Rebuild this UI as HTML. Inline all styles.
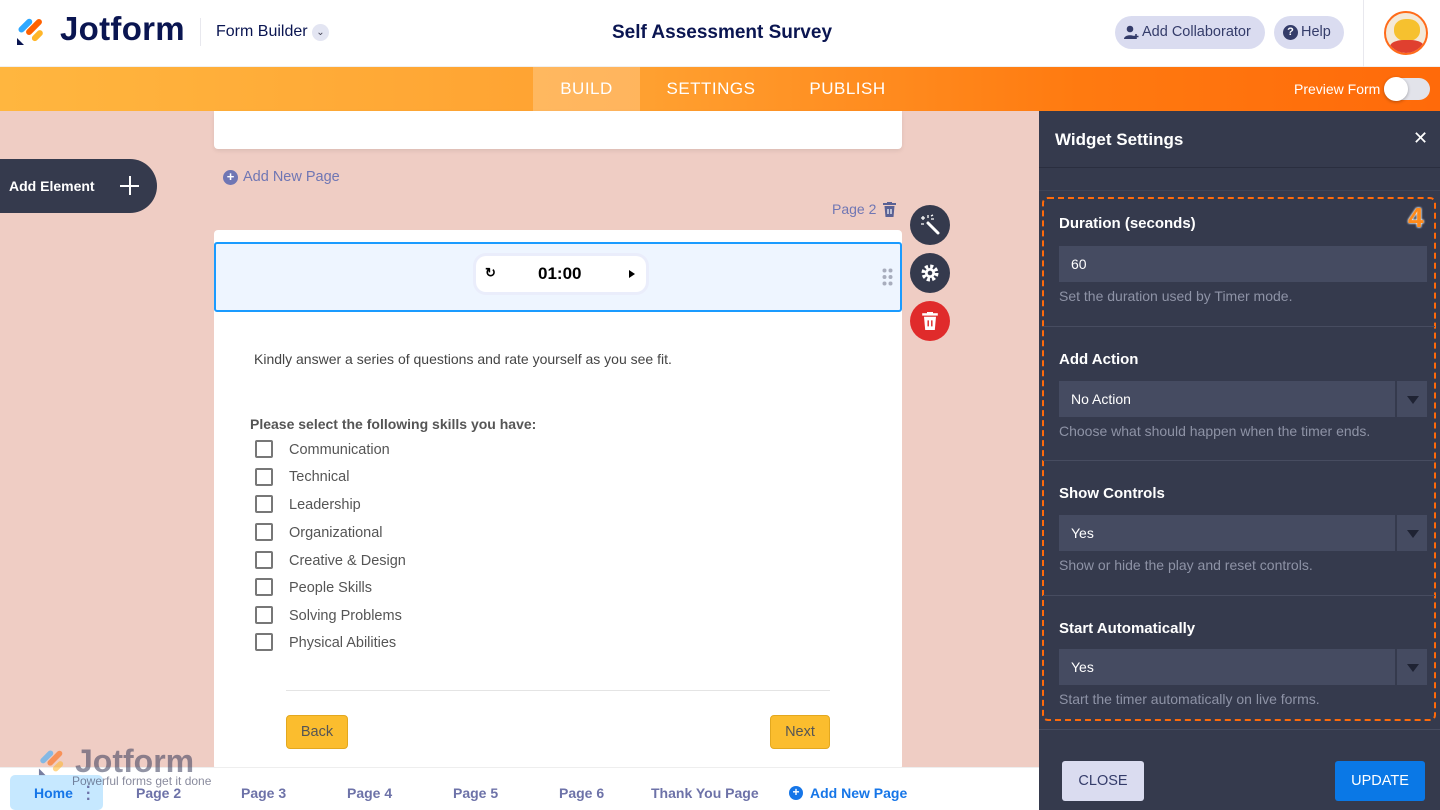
<!DOCTYPE html>
<html><head><meta charset="utf-8"><style>
*{box-sizing:border-box;margin:0;padding:0}
body{width:1440px;height:810px;overflow:hidden;background:#efcdc4;font-family:"Liberation Sans",sans-serif;position:relative}
.abs{position:absolute}
.hdr{left:0;top:0;width:1440px;height:67px;background:#fff;border-bottom:1px solid #f0f0f0}
.bar{left:0;top:67px;width:1440px;height:44px;background:linear-gradient(90deg,#ffb63f 0%,#ffa030 45%,#ff7a10 75%,#ff6a0a 100%)}
.tab{top:67px;height:44px;color:#fff;font-size:17px;letter-spacing:.5px;line-height:44px;text-align:center}
.side{left:1039px;top:111px;width:401px;height:699px;background:#353a4d}
.lbl{color:#fff;font-weight:bold;font-size:15px}
.inp{left:1059px;width:368px;height:36px;background:#454b61;color:#fff;font-size:14px;line-height:36px;padding-left:12px}
.arr{right:0;top:0;width:32px;height:36px;border-left:2px solid #353a4d}
.arr:after{content:"";position:absolute;left:10px;top:15px;border:6px solid transparent;border-top:8px solid #1f2333}
.hint{left:1059px;color:#8e93a6;font-size:14px}
.sep{left:1043px;width:392px;height:1px;background:#474c60}
.cb{left:255px;width:18px;height:18px;border:2px solid #777;border-radius:2px}
.opt{left:289px;font-size:14.5px;color:#555}
.pg{top:785px;font-size:14px;color:#6d72a8;font-weight:bold}
</style></head><body>
<div class="abs hdr"></div>
<svg class="abs" style="left:16px;top:14px" width="32" height="32" viewBox="0 0 32 32"><rect x="1" y="9" width="17" height="6" rx="3" transform="rotate(-45 9 12)" fill="#2ea8ff"/><rect x="8" y="10" width="20" height="6" rx="3" transform="rotate(-45 18 13)" fill="#ff6100"/><rect x="15" y="19" width="13" height="6" rx="3" transform="rotate(-45 21 22)" fill="#ffb629"/><path d="M1 24 L8 31 L1 31Z" fill="#0a1551"/></svg>
<div class="abs" style="left:60px;top:10px;font-size:33px;font-weight:bold;color:#0a1551;letter-spacing:0.3px">Jotform</div>
<div class="abs" style="left:200px;top:18px;width:1px;height:28px;background:#e8e8ee"></div>
<div class="abs" style="left:216px;top:23px;font-size:16px;color:#0a1551">Form Builder</div>
<div class="abs" style="left:312px;top:24px;width:17px;height:17px;border-radius:50%;background:#e3e5f2;color:#445;font-size:10px;text-align:center;line-height:17px">&#8964;</div>
<div class="abs" style="left:0;width:1444px;top:22px;text-align:center;font-size:19px;font-weight:bold;color:#0a1551">Self Assessment Survey</div>
<div class="abs" style="left:1115px;top:16px;width:150px;height:33px;border-radius:17px;background:#dadcf0;color:#343c6a;font-size:14.5px;line-height:33px;padding-left:27px">Add Collaborator</div>
<svg class="abs" style="left:1124px;top:25px" width="15" height="15" viewBox="0 0 15 15"><circle cx="6" cy="4" r="3.3" fill="#343c6a"/><path d="M0 14c0-5 12-5 12 0z" fill="#343c6a"/><path d="M12 9v5M9.5 11.5h5" stroke="#343c6a" stroke-width="1.6"/></svg>
<div class="abs" style="left:1274px;top:16px;width:70px;height:33px;border-radius:17px;background:#dadcf0;color:#343c6a;font-size:14.5px;line-height:33px;padding-left:27px">Help</div>
<div class="abs" style="left:1283px;top:25px;width:15px;height:15px;border-radius:50%;background:#343c6a;color:#fff;font-size:11px;font-weight:bold;text-align:center;line-height:15px">?</div>
<div class="abs" style="left:1363px;top:0;width:1px;height:67px;background:#e8e8ee"></div>
<div class="abs" style="left:1384px;top:11px;width:44px;height:44px;border-radius:50%;background:#f4e9d8;border:2px solid #ff6b1a;overflow:hidden"><div class="abs" style="left:8px;top:6px;width:26px;height:22px;border-radius:45%;background:#f6c12f"></div><div class="abs" style="left:4px;top:27px;width:34px;height:16px;border-radius:40% 40% 0 0;background:#e0402f"></div></div>
<div class="abs bar"></div>
<div class="abs tab" style="left:533px;width:107px;background:rgba(255,255,255,.22)">BUILD</div>
<div class="abs tab" style="left:655px;width:112px">SETTINGS</div>
<div class="abs tab" style="left:795px;width:105px">PUBLISH</div>
<div class="abs" style="left:1294px;top:81px;color:#fff;font-size:14px">Preview Form</div>
<div class="abs" style="left:1384px;top:78px;width:46px;height:22px;border-radius:11px;background:#e2e3ea"></div>
<div class="abs" style="left:1384px;top:77px;width:24px;height:24px;border-radius:50%;background:#fff;box-shadow:0 1px 3px rgba(0,0,0,.3)"></div>

<!-- canvas -->
<div class="abs" style="left:214px;top:111px;width:688px;height:38px;background:#fff;border-radius:0 0 4px 4px;box-shadow:0 2px 4px rgba(0,0,0,.08)"></div>
<div class="abs" style="left:0;top:159px;width:157px;height:54px;background:#353a4d;border-radius:0 27px 27px 0"></div>
<div class="abs" style="left:9px;top:178px;color:#fff;font-size:14px;font-weight:bold">Add Element</div>
<div class="abs" style="left:120px;top:185px;width:19px;height:2px;background:#fff"></div>
<div class="abs" style="left:128.5px;top:176px;width:2px;height:19px;background:#fff"></div>
<div class="abs" style="left:223px;top:170px;width:15px;height:15px;border-radius:50%;background:#6f76b4;color:#fff;font-size:13px;line-height:14px;text-align:center;font-weight:bold">+</div>
<div class="abs" style="left:243px;top:169px;font-size:14.5px;color:#6f76b4">Add New Page</div>
<div class="abs" style="left:832px;top:201px;font-size:14px;color:#6f76b4">Page 2</div>
<svg class="abs" style="left:883px;top:202px" width="13" height="15" viewBox="0 0 13 15"><rect x="0" y="1" width="13" height="2" fill="#5a6194"/><rect x="4" y="0" width="5" height="2" fill="#5a6194"/><path d="M1.5 4h10l-1 11h-8z" fill="#5a6194"/><path d="M5 7v5M8 7v5" stroke="#fff" stroke-width="1.2"/></svg>
<div class="abs" style="left:214px;top:230px;width:688px;height:540px;background:#fff;border-radius:4px"></div>
<div class="abs" style="left:214px;top:242px;width:688px;height:70px;background:#eef5ff;border:2px solid #1a9bff;border-radius:3px"></div>
<div class="abs" style="left:476px;top:256px;width:170px;height:36px;border-radius:10px;background:#fff;box-shadow:0 0 0 3px #eaedfb"></div>
<div class="abs" style="left:485px;top:265px;font-size:13px;color:#000;font-weight:bold">&#8635;</div>
<div class="abs" style="left:538px;top:264px;font-size:17px;font-weight:bold;color:#000">01:00</div>
<div class="abs" style="left:629px;top:270px;border:4px solid transparent;border-left:6px solid #000;border-right:0"></div>
<svg class="abs" style="left:882px;top:268px" width="11" height="18"><g fill="#a8adbd"><circle cx="2.5" cy="2.5" r="2"/><circle cx="8.5" cy="2.5" r="2"/><circle cx="2.5" cy="9" r="2"/><circle cx="8.5" cy="9" r="2"/><circle cx="2.5" cy="15.5" r="2"/><circle cx="8.5" cy="15.5" r="2"/></g></svg>
<div class="abs" style="left:910px;top:205px;width:40px;height:40px;border-radius:50%;background:#353a4d"></div>
<svg class="abs" style="left:919px;top:214px" width="22" height="22" viewBox="0 0 22 22"><path d="M9 9l10 10" stroke="#fff" stroke-width="3" stroke-linecap="round"/><path d="M4 2v4M2 4h4M9 1v3M12 5h3M2 10h3M12 2l2-1" stroke="#fff" stroke-width="1.3"/></svg>
<div class="abs" style="left:910px;top:253px;width:40px;height:40px;border-radius:50%;background:#353a4d"></div>
<svg class="abs" style="left:919px;top:262px" width="22" height="22" viewBox="0 0 22 22"><circle cx="11" cy="11" r="6.5" fill="none" stroke="#fff" stroke-width="4" stroke-dasharray="3 2.1"/><circle cx="11" cy="11" r="5" fill="#fff"/><circle cx="11" cy="11" r="2.3" fill="#353a4d"/></svg>
<div class="abs" style="left:910px;top:301px;width:40px;height:40px;border-radius:50%;background:#e02b2b"></div>
<svg class="abs" style="left:922px;top:312px" width="16" height="18" viewBox="0 0 13 15"><rect x="0" y="1" width="13" height="2" fill="#fff"/><rect x="4" y="0" width="5" height="2" fill="#fff"/><path d="M1.5 4h10l-1 11h-8z" fill="#fff"/><path d="M5 7v5M8 7v5" stroke="#e02b2b" stroke-width="1.2"/></svg>
<div class="abs" style="left:254px;top:351px;font-size:14px;color:#444">Kindly answer a series of questions and rate yourself as you see fit.</div>
<div class="abs" style="left:250px;top:416px;font-size:14px;color:#555;font-weight:bold">Please select the following skills you have:</div>
<div class="abs cb" style="top:440px"></div><div class="abs opt" style="top:442px">Communication</div>
<div class="abs cb" style="top:468px"></div><div class="abs opt" style="top:469px">Technical</div>
<div class="abs cb" style="top:495px"></div><div class="abs opt" style="top:497px">Leadership</div>
<div class="abs cb" style="top:523px"></div><div class="abs opt" style="top:525px">Organizational</div>
<div class="abs cb" style="top:551px"></div><div class="abs opt" style="top:553px">Creative &amp; Design</div>
<div class="abs cb" style="top:578px"></div><div class="abs opt" style="top:580px">People Skills</div>
<div class="abs cb" style="top:606px"></div><div class="abs opt" style="top:608px">Solving Problems</div>
<div class="abs cb" style="top:633px"></div><div class="abs opt" style="top:635px">Physical Abilities</div>
<div class="abs" style="left:286px;top:690px;width:544px;height:1px;background:#e4e4e4"></div>
<div class="abs" style="left:286px;top:715px;width:62px;height:34px;background:#fbbd2e;border:1px solid #e3a81f;border-radius:4px;color:#555;font-size:14.5px;text-align:center;line-height:32px">Back</div>
<div class="abs" style="left:770px;top:715px;width:60px;height:34px;background:#fbbd2e;border:1px solid #e3a81f;border-radius:4px;color:#555;font-size:14.5px;text-align:center;line-height:32px">Next</div>

<!-- bottom -->
<div class="abs" style="left:0;top:767px;width:1039px;height:43px;background:#fff;border-top:1px solid #eee"></div>
<div class="abs" style="left:10px;top:775px;width:93px;height:35px;background:#c6e8ff;border-radius:5px"></div>
<div class="abs pg" style="left:34px;color:#1676e8">Home</div>
<div class="abs" style="left:86px;top:785px;font-size:16px;color:#6d72a8;font-weight:bold;line-height:6px">&middot;<br>&middot;<br>&middot;</div>
<div class="abs pg" style="left:136px">Page 2</div>
<div class="abs pg" style="left:241px">Page 3</div>
<div class="abs pg" style="left:347px">Page 4</div>
<div class="abs pg" style="left:453px">Page 5</div>
<div class="abs pg" style="left:559px">Page 6</div>
<div class="abs pg" style="left:651px">Thank You Page</div>
<div class="abs" style="left:789px;top:786px;width:14px;height:14px;border-radius:50%;background:#1676e8;color:#fff;font-size:12px;line-height:13px;text-align:center;font-weight:bold">+</div>
<div class="abs pg" style="left:810px;color:#1676e8">Add New Page</div>
<svg class="abs" style="left:38px;top:746px;opacity:.55" width="30" height="30" viewBox="0 0 32 32"><rect x="1" y="9" width="17" height="6" rx="3" transform="rotate(-45 9 12)" fill="#2ea8ff"/><rect x="8" y="10" width="20" height="6" rx="3" transform="rotate(-45 18 13)" fill="#ff6100"/><rect x="15" y="19" width="13" height="6" rx="3" transform="rotate(-45 21 22)" fill="#ffb629"/><path d="M1 24 L8 31 L1 31Z" fill="#0a1551"/></svg>
<div class="abs" style="left:75px;top:743px;opacity:.55;font-size:32px;font-weight:bold;color:#3a3d5c">Jotform</div>
<div class="abs" style="left:72px;top:774px;opacity:.6;font-size:12px;color:#3a3d5c">Powerful forms get it done</div>

<!-- side panel -->
<div class="abs side"></div>
<div class="abs" style="left:1055px;top:130px;color:#fff;font-size:17px;font-weight:bold">Widget Settings</div>
<div class="abs" style="left:1413px;top:128px;color:#fff;font-size:18px">&#10005;</div>
<div class="abs" style="left:1039px;top:167px;width:401px;height:1px;background:#2a2e3f"></div>
<div class="abs" style="left:1039px;top:190px;width:401px;height:1px;background:#3f4457"></div>
<div class="abs" style="left:1042px;top:197px;width:394px;height:524px;border:2px dashed #ff6a0a;border-radius:6px"></div>
<div class="abs" style="left:1408px;top:202px;color:#ff8a1a;font-size:28px;font-weight:bold;text-shadow:0 0 2px #fff,0 0 2px #fff">4</div>
<div class="abs lbl" style="left:1059px;top:215px">Duration (seconds)</div>
<div class="abs inp" style="top:246px">60</div>
<div class="abs hint" style="top:288px">Set the duration used by Timer mode.</div>
<div class="abs sep" style="top:326px"></div>
<div class="abs lbl" style="left:1059px;top:351px">Add Action</div>
<div class="abs inp" style="top:381px">No Action<div class="abs arr"></div></div>
<div class="abs hint" style="top:423px">Choose what should happen when the timer ends.</div>
<div class="abs sep" style="top:460px"></div>
<div class="abs lbl" style="left:1059px;top:485px">Show Controls</div>
<div class="abs inp" style="top:515px">Yes<div class="abs arr"></div></div>
<div class="abs hint" style="top:557px">Show or hide the play and reset controls.</div>
<div class="abs sep" style="top:595px"></div>
<div class="abs lbl" style="left:1059px;top:620px">Start Automatically</div>
<div class="abs inp" style="top:649px">Yes<div class="abs arr"></div></div>
<div class="abs hint" style="top:691px">Start the timer automatically on live forms.</div>
<div class="abs" style="left:1039px;top:729px;width:401px;height:1px;background:#474c60"></div>
<div class="abs" style="left:1062px;top:761px;width:82px;height:40px;background:#dadcf0;border-radius:3px;color:#343c6a;font-size:14.5px;text-align:center;line-height:40px">CLOSE</div>
<div class="abs" style="left:1335px;top:761px;width:90px;height:40px;background:#0a78e6;border-radius:3px;color:#fff;font-size:14.5px;text-align:center;line-height:40px">UPDATE</div>
</body></html>
